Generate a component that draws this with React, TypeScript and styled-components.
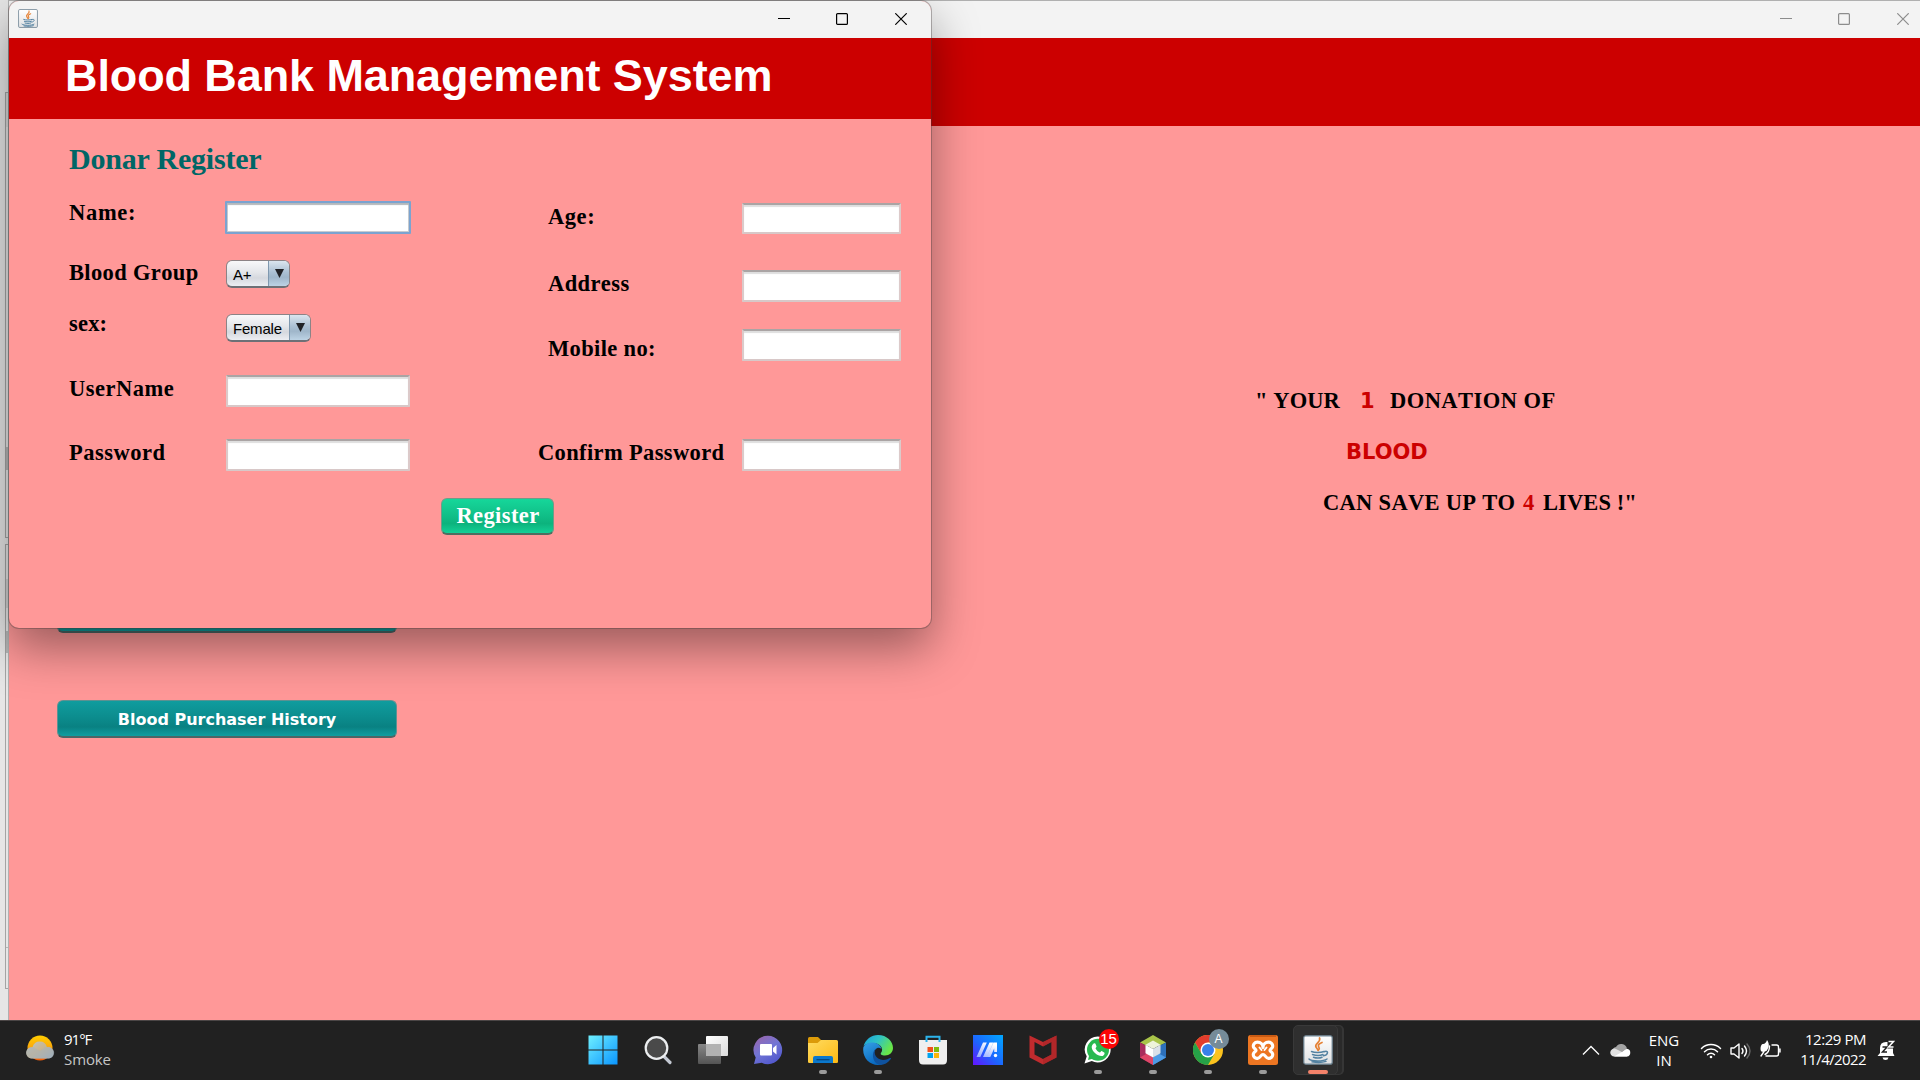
import React from "react";
import styled, { createGlobalStyle } from "styled-components";

const Global = createGlobalStyle`
  * { box-sizing: border-box; }
  html, body { margin: 0; padding: 0; }
  body { width: 1920px; height: 1080px; overflow: hidden; }
`;

const serif = `"Liberation Serif", "Times New Roman", serif`;
const sans = `"Liberation Sans", Arial, sans-serif`;
const wide = `"DejaVu Sans", Verdana, sans-serif`;
const system = `"Open Sans", "Segoe UI", sans-serif`;

const Screen = styled.div`
  display: flex;
  flex-direction: column;
  width: 1920px;
  height: 1080px;
  overflow: hidden;
`;

const Desktop = styled.main`
  position: relative;
  height: 1020px;
  overflow: hidden;
  background: #e6e6e6;
`;

/* Edge of the application lying behind both windows */
const Backdrop = styled.div`
  display: flex;
  flex-direction: column;
  width: 30px;
  height: 1020px;
  padding: 92px 0 0 5px;
`;

const BackPanel = styled.div<{ $h: number; $gap?: number }>`
  flex: none;
  display: flex;
  flex-direction: column;
  height: ${(p) => p.$h}px;
  margin-top: ${(p) => p.$gap ?? 0}px;
  border: 1px solid #a4a4a4;
`;

const BackMark = styled.div<{ $h: number; $drop: number; $c: string }>`
  flex: none;
  height: ${(p) => p.$h}px;
  margin-top: ${(p) => p.$drop}px;
  background: ${(p) => p.$c};
`;

const Window = styled.section<{ $w: number; $h: number; $front?: boolean }>`
  position: absolute;
  left: 9px;
  top: 1px;
  width: ${(p) => p.$w}px;
  height: ${(p) => p.$h}px;
  background: #ff9898;
  border-radius: ${(p) => (p.$front ? "10px" : "0")};
  box-shadow: ${(p) =>
    p.$front
      ? "0 0 0 1px rgba(70,60,60,.36), 0 20px 48px rgba(0,0,0,.4)"
      : "0 0 0 1px #b0b0b0"};
`;

const TitleBar = styled.header<{ $front?: boolean }>`
  display: flex;
  justify-content: space-between;
  height: 37px;
  padding-left: 9px;
  padding-right: ${(p) => (p.$front ? "1px" : "0")};
  background: #f3f3f3;
  border-radius: ${(p) => (p.$front ? "10px 10px 0 0" : "0")};
  color: ${(p) => (p.$front ? "#000" : "#8c8c8c")};
`;

const AppIcon = styled.span`
  width: 20px;
  height: 19px;
  margin-top: 8px;
  svg { display: block; }
`;

const Controls = styled.div`
  display: flex;
  margin-left: auto;
`;

const Control = styled.span`
  display: grid;
  place-items: center;
  width: 58.5px;
  height: 36px;
  svg { display: block; }
`;

const Banner = styled.div<{ $h: number }>`
  height: ${(p) => p.$h}px;
  padding: 12px 0 0 56px;
  background: #cc0000;
`;

const BannerTitle = styled.h1`
  margin: 0;
  color: #fff;
  font: bold 45px/52px ${sans};
  letter-spacing: -0.1px;
  white-space: nowrap;
`;

const FormBody = styled.div`
  padding: 23px 0 0 60px;
`;

const FormTitle = styled.h2`
  height: 34px;
  margin: 0 0 20px;
  color: #006666;
  font: bold 30px/34px ${serif};
  letter-spacing: -0.2px;
`;

const Columns = styled.div`
  display: flex;
  height: 290px;
`;

const Column = styled.div<{ $w: number }>`
  display: flex;
  flex-direction: column;
  width: ${(p) => p.$w}px;
`;

const FieldRow = styled.div<{ $h: number }>`
  display: flex;
  align-items: flex-start;
  height: ${(p) => p.$h}px;
`;

const Label = styled.label<{ $w: number; $drop: number; $track: number; $indent?: number }>`
  flex: none;
  width: ${(p) => p.$w}px;
  margin-top: ${(p) => p.$drop}px;
  padding-left: ${(p) => p.$indent ?? 0}px;
  color: #000;
  font: bold 22.5px/26px ${serif};
  font-kerning: none;
  font-variant-ligatures: none;
  letter-spacing: ${(p) => p.$track}px;
  white-space: nowrap;
`;

const TextBox = styled.input<{ $w: number; $h?: number; $drop: number; $focus?: boolean }>`
  flex: none;
  width: ${(p) => p.$w}px;
  height: ${(p) => p.$h ?? 32}px;
  margin: ${(p) => p.$drop}px 0 0 ${(p) => (p.$focus ? -1 : 0)}px;
  padding: 0 6px;
  outline: none;
  border-radius: 1px;
  background: #fff;
  font: 15px ${sans};
  ${(p) =>
    p.$focus
      ? `border: 2px solid #7ba3d0;
         box-shadow: inset 0 2px 1px #b4b8bc, inset 0 0 0 1px #c8ccd0;`
      : `border: 2px solid;
         border-color: #aaa4a4 #dccaca #d8c8c8 #dccaca;
         box-shadow: inset 0 2px 1px #dedede;`}
`;

const Combo = styled.div<{ $w: number; $drop: number }>`
  display: flex;
  width: ${(p) => p.$w}px;
  height: 28px;
  margin-top: ${(p) => p.$drop}px;
  overflow: hidden;
  border: 1px solid #8c8386;
  border-bottom: 2px solid #6d7076;
  border-radius: 6px;
  background: linear-gradient(#f8f8fa 0%, #e4e6ea 45%, #d5d8de 68%, #eceef3 100%);
`;

const ComboValue = styled.span`
  flex: 1;
  padding: 5px 0 0 6px;
  color: #000;
  font: 15px/18px ${sans};
  letter-spacing: -0.2px;
  white-space: nowrap;
`;

const ComboArrow = styled.span`
  display: grid;
  justify-items: center;
  width: 21px;
  padding-top: 8px;
  border-left: 1px solid #7f98af;
  background: linear-gradient(#dbe5ee 0%, #abc0d3 45%, #9fb6ca 65%, #bdd3e5 100%);
  svg { display: block; }
`;

const RegisterButton = styled.button`
  display: block;
  width: 113px;
  height: 37px;
  margin: 12px 0 0 372px;
  padding: 0 0 1px 1px;
  border: 1px solid #6f9c88;
  border-bottom: 2px solid #4e6e60;
  border-radius: 6px;
  background: linear-gradient(#16d79a 0%, #10be87 50%, #0cb37d 72%, #13d096 100%);
  color: #fff;
  font: bold 22.5px/26px ${serif};
  font-kerning: none;
  letter-spacing: 0.4px;
`;

const HomeContent = styled.div`
  display: flex;
  height: 893px;
`;

const Menu = styled.nav`
  display: flex;
  flex-direction: column;
  gap: 67px;
  width: 1246px;
  padding: 469px 0 0 48px;
`;

const MenuButton = styled.button`
  width: 340px;
  height: 38px;
  padding: 3px 0 0;
  border: 1px solid #5e9292;
  border-bottom: 2px solid #4c6666;
  border-radius: 6px;
  background: linear-gradient(#109c9e 0%, #0c8d8e 45%, #098182 74%, #109ea0 100%);
  color: #fff;
  font: bold 16px/20px ${wide};
`;

const Slogan = styled.div`
  display: flex;
  flex-direction: column;
  width: 665px;
  padding-top: 262px;
`;

const SloganLine = styled.div<{ $indent: number; $h: number }>`
  display: flex;
  height: ${(p) => p.$h}px;
  padding-left: ${(p) => p.$indent}px;
  line-height: 26px;
`;

const Words = styled.span<{ $w: number; $track?: number; $red?: boolean }>`
  flex: none;
  width: ${(p) => p.$w}px;
  color: ${(p) => (p.$red ? "#cc0000" : "#000")};
  font: bold 22.5px/26px ${serif};
  font-kerning: none;
  letter-spacing: ${(p) => p.$track ?? 0}px;
  white-space: nowrap;
`;

const Accent = styled.span<{ $w?: number }>`
  flex: none;
  width: ${(p) => (p.$w ? `${p.$w}px` : "auto")};
  color: #cc0000;
  font: bold 21px/27px ${wide};
`;

const Taskbar = styled.footer`
  display: flex;
  height: 60px;
  border-top: 1px solid #4b4646;
  background: #212121;
  color: #fff;
  font: 15px/20px ${system};
`;

const Weather = styled.div`
  display: flex;
  width: 575px;
  padding: 8px 0 0 25px;
  gap: 9px;
  svg { display: block; margin-top: 5px; }
`;

const Lines = styled.div<{ $align?: string }>`
  display: flex;
  flex-direction: column;
  align-items: ${(p) => p.$align ?? "flex-start"};
`;

const Line = styled.span<{ $track?: number; $dim?: boolean }>`
  height: 20px;
  letter-spacing: ${(p) => p.$track ?? 0}px;
  color: ${(p) => (p.$dim ? "#c6c6c6" : "#fff")};
  white-space: nowrap;
`;

const Dock = styled.div`
  display: flex;
  width: 770px;
`;

const DockItem = styled.div<{ $active?: boolean }>`
  display: flex;
  flex-direction: column;
  align-items: center;
  width: ${(p) => (p.$active ? "45px" : "55px")};
  height: ${(p) => (p.$active ? "50px" : "60px")};
  margin: ${(p) => (p.$active ? "4px 0 0 3px" : "0")};
  padding: ${(p) => (p.$active ? "5px 0 0 5px" : "10px 0 0")};
  border: ${(p) => (p.$active ? "1px solid #393939" : "0")};
  border-radius: 5px;
  background: ${(p) => (p.$active ? "#2f2f2f" : "transparent")};
  box-shadow: ${(p) => (p.$active ? "5px 0 0 -1px #2a2a2a, 6px 0 0 0 #363636" : "none")};
`;

const IconBox = styled.div`
  position: relative;
  flex: none;
  display: grid;
  place-items: center;
  width: 38px;
  height: 38px;
  svg { display: block; }
`;

const Indicator = styled.span<{ $active?: boolean }>`
  width: ${(p) => (p.$active ? 20 : 8)}px;
  height: 4px;
  margin-top: 1px;
  border-radius: 2px;
  background: ${(p) => (p.$active ? "#f4826a" : "#9b9b9b")};
`;

const Badge = styled.span<{ $c: string; $s: number }>`
  position: absolute;
  right: -2px;
  top: -2px;
  display: grid;
  place-items: center;
  width: 20px;
  height: 20px;
  border-radius: 50%;
  background: ${(p) => p.$c};
  color: #fff;
  font: ${(p) => p.$s}px/20px ${sans};
`;

const Tray = styled.div`
  display: flex;
  width: 338px;
  margin-left: auto;
  padding-top: 8px;
  svg { display: block; }
`;

const TrayCell = styled.div<{ $w: number; $drop?: number; $gap?: number }>`
  flex: none;
  width: ${(p) => p.$w}px;
  margin-left: ${(p) => p.$gap ?? 0}px;
  padding-top: ${(p) => p.$drop ?? 0}px;
`;

const JavaCup = ({ w, h }: { w: number; h: number }) => (
  <svg width={w} height={h} viewBox="0 0 30 30" preserveAspectRatio="none">
    <defs>
      <linearGradient id="tile" x2="0" y2="1">
        <stop stopColor="#fff" /><stop offset="1" stopColor="#dfe1e3" />
      </linearGradient>
    </defs>
    <rect x=".8" y=".8" width="28.4" height="28.4" rx="2" fill="url(#tile)" stroke="#6d8493" strokeWidth="1.2" />
    <path d="M16.5 3c2 4-5.5 5.500-3.500 9 .6 1.200 1.800 2 2 3.500M19 7.500c-3.500 1.500-4.500 3-3 5 .8 1.200 0 2.200-.8 3" fill="none" stroke="#e58235" strokeWidth="1.700" strokeLinecap="round" />
    <path d="M8.500 16.500c3 1.200 9 1.200 12.500 0M9.500 19.500c3 1 8 1 10.500 0M10.500 22.200c2.500 .9 6.500 .9 8.500 0M21 16.800c5-2 4.500 3.200-.5 4M6 24c2.500 2.500 14.500 2.500 18 0M9 26.800c5 1 11 .6 14-.4" fill="none" stroke="#5382a1" strokeWidth="1.500" strokeLinecap="round" />
  </svg>
);

const WindowControls = () => (
  <Controls>
    <Control><svg width="12" height="12"><path d="M0 5.500h12" stroke="currentColor" /></svg></Control>
    <Control><svg width="12" height="12"><rect x=".6" y=".6" width="10.800" height="10.800" rx="1" fill="none" stroke="currentColor" strokeWidth="1.200" /></svg></Control>
    <Control><svg width="12" height="12"><path d="M.3.3l11.400 11.400M11.700.3.3 11.700" stroke="currentColor" strokeWidth="1.200" /></svg></Control>
  </Controls>
);

const Select = ({ value, width, drop }: { value: string; width: number; drop: number }) => (
  <Combo $w={width} $drop={drop}>
    <ComboValue>{value}</ComboValue>
    <ComboArrow><svg width="9" height="9"><path d="M0 0h9L4.500 9z" fill="#202226" /></svg></ComboArrow>
  </Combo>
);

const WindowsLogo = () => (
  <svg width="30" height="30" viewBox="0 0 30 30">
    <defs><linearGradient id="win" x2="1" y2="1"><stop stopColor="#6ff0ff" /><stop offset="1" stopColor="#0a95ff" /></linearGradient></defs>
    <path d="M.5.500h14v14H.5zM15.500.500h14v14h-14zM.5 15.500h14v14H.5zM15.500 15.500h14v14h-14z" fill="url(#win)" />
  </svg>
);

const SearchIcon = () => (
  <svg width="30" height="30" viewBox="0 0 30 30">
    <path d="M20 20.500l7 7" stroke="#c3c8d2" strokeWidth="3.200" strokeLinecap="round" />
    <circle cx="13.500" cy="13" r="10.800" fill="#4a4a4a" stroke="#eceef0" strokeWidth="2.200" />
  </svg>
);

const TaskViewIcon = () => (
  <svg width="32" height="30" viewBox="0 0 32 30">
    <defs>
      <linearGradient id="tv" x2="1" y2="1"><stop stopColor="#fff" /><stop offset="1" stopColor="#dcdcdc" /></linearGradient>
      <linearGradient id="tb" x2="0" y2="1"><stop stopColor="#888" /><stop offset="1" stopColor="#545454" /></linearGradient>
    </defs>
    <rect x="9" y="1" width="22" height="20" rx="1" fill="url(#tv)" />
    <rect x="1" y="9" width="23" height="20" rx="1" fill="url(#tb)" />
    <path d="M9 9h15v12H9z" fill="#b2b2b2" />
  </svg>
);

const ChatIcon = () => (
  <svg width="30" height="30" viewBox="0 0 30 30">
    <defs><linearGradient id="chat" x1=".1" x2=".7" y2="1"><stop stopColor="#9b65aa" /><stop offset=".5" stopColor="#7275d5" /><stop offset="1" stopColor="#5057cd" /></linearGradient></defs>
    <path d="M15 .800a14.200 14.200 0 1 1-6.200 27L1 29l1.700-6.500A14.200 14.200 0 0 1 15 .8z" fill="url(#chat)" />
    <rect x="7" y="9" width="12" height="11.500" rx="1" fill="#fff" />
    <path d="M20 13l3.500-3v9.500L20 16.500z" fill="#fff" />
  </svg>
);

const FolderIcon = () => (
  <svg width="30" height="28" viewBox="0 0 30 28">
    <defs><linearGradient id="fold" x2="1" y2="1"><stop stopColor="#ffdc61" /><stop offset="1" stopColor="#fdb913" /></linearGradient></defs>
    <path d="M0 2.500Q0 1 1.500 1H10l3 3v8H0z" fill="#dc9b09" />
    <path d="M0 7h9.500L13 4h15.500Q30 4 30 5.500V26q0 1-1.500 1h-27Q0 27 0 26z" fill="url(#fold)" />
    <path d="M5 27v-5q0-2 2-2h16q2 0 2 2v5z" fill="#0b78cc" />
    <path d="M8.500 23.700h13" stroke="#06477f" strokeWidth="1.300" />
  </svg>
);

const EdgeIcon = () => (
  <svg width="30" height="30" viewBox="0 0 30 30">
    <defs>
      <linearGradient id="eg" x2="1" y2=".5"><stop stopColor="#1a9fe0" /><stop offset=".5" stopColor="#30c3c3" /><stop offset="1" stopColor="#69e647" /></linearGradient>
      <linearGradient id="eb" x2=".5" y2="1"><stop stopColor="#36a0e6" /><stop offset="1" stopColor="#0868bf" /></linearGradient>
    </defs>
    <path d="M.6 11C2.500 4.500 8.300 0 15 0c9 0 15 6.500 15 13 0 4.500-3.500 7.500-8 7.500-3.500 0-5-1.300-4-2.500 3.500-4.500-1.500-10-7.500-10C5.500 8 2 9.500.6 11z" fill="url(#eg)" />
    <path d="M.4 12C2.500 8.800 6 7.200 10 7.600c5 .4 8 3.400 8.400 6.400-3-3-8 0-7.400 6 .6 5 4 8.500 8.500 9.300C9 32.500-1.500 24 .4 12z" fill="url(#eb)" />
    <path d="M13 13.600c-3.500 5 .5 11.400 7 11.400 3.500 0 5.500-1.300 7-2 .8-.3 1.300.3.800 1-2.800 4-6.500 5.700-10.800 6C10 29 7.500 18 13 13.600z" fill="#0f529e" />
  </svg>
);

const StoreIcon = () => (
  <svg width="30" height="30" viewBox="0 0 30 30">
    <path d="M1 5h28v20q0 4.500-4 4.500H5q-4 0-4-4.500z" fill="#efefef" />
    <path d="M8.500 7V1.700h13V7" fill="none" stroke="#2cb4ec" strokeWidth="2" />
    <path d="M9.500 12H15v5H9.500z" fill="#f1511b" /><path d="M16 12h5v5h-5z" fill="#80bb0a" />
    <path d="M9.500 18H15v5H9.500z" fill="#00a3ee" /><path d="M16 18h5v5h-5z" fill="#fbb60a" />
  </svg>
);

const MyAsusIcon = () => (
  <svg width="30" height="30" viewBox="0 0 30 30">
    <defs>
      <linearGradient id="asus" x1="0" y1="1" x2="1" y2="0"><stop stopColor="#6512ff" /><stop offset=".45" stopColor="#1d65ff" /><stop offset="1" stopColor="#00a8ff" /></linearGradient>
      <linearGradient id="bars" x1="0" y1="1" x2=".6" y2="0"><stop stopColor="#8fa7ff" /><stop offset="1" stopColor="#fff" /></linearGradient>
    </defs>
    <path d="M0 0h30v30H0z" fill="url(#asus)" />
    <path d="M3.500 22L10 7.500h3.800L7.300 22zM10 22l6.500-14.500h3.800L13.800 22zM20.500 7.500H24V17h-2.800v-3.500L17.300 22h-3.500z" fill="url(#bars)" />
    <circle cx="22.500" cy="20.500" r="1.700" fill="#fff" />
  </svg>
);

const McAfeeIcon = () => (
  <svg width="28" height="30" viewBox="0 0 28 30">
    <path d="M.5.500L14 7 27.500.500v22L14 29.500.5 22.500zM5.500 7v12.500L14 24l8.500-4.500V7L14 11.500z" fill="#c12b2e" fillRule="evenodd" />
    <path d="M14 7L27.500.500v22L14 29.500V24l8.500-4.500V7L14 11.500z" fill="#a82427" opacity=".6" />
  </svg>
);

const WhatsAppIcon = () => (
  <svg width="28" height="28" viewBox="0 0 28 28">
    <path d="M14 .500a13 13 0 1 1-6.200 24.600L.5 27.500l2.200-7.200A13 13 0 0 1 14 .5z" fill="#fff" />
    <circle cx="14" cy="13.800" r="11" fill="#29b950" />
    <path d="M4 24l1.500-6 4 4.500z" fill="#29b950" />
    <path d="M9.700 7.500c.5-.5 1.500-.5 1.800.2l1 2.500c.3.800-1.200 1.700-.9 2.300 1 2 2.300 3.100 4.100 3.900.7.3 1.300-1.600 2-1.300l2.500 1.300c1 .5-.1 3.300-2.200 3.600-3.500.6-10-4-10.300-8.700-.1-1.500.8-2.700 2-3.800z" fill="#fff" />
  </svg>
);

const NetBeansIcon = () => (
  <svg width="28" height="30" viewBox="0 0 28 30">
    <path d="M14 0l13 7.500-7 3.500-6-3-6 3-7-3.500z" fill="#a9c449" />
    <path d="M1 7.500l7 3.500v7.500l6 4V30L1 22.500z" fill="#a92d5c" />
    <path d="M1 22.500l7-4 6 4V30z" fill="#df4668" />
    <path d="M27 7.500L20 11v7.500l-6 4V30l13-7.500z" fill="#2c70bb" />
    <path d="M27 22.500l-7-4-6 4V30z" fill="#4d9be6" />
    <path d="M14 5.500l7.500 4.200-7.500 4.300-7.500-4.300z" fill="#eef3d9" /><path d="M6.500 9.700l7.500 4.300v8.500l-7.500-4.300z" fill="#fff" /><path d="M21.500 9.700L14 14v8.500l7.500-4.300z" fill="#dbe1e9" />
  </svg>
);

const ChromeIcon = () => (
  <svg width="30" height="30" viewBox="0 0 30 30">
    <circle cx="15" cy="15" r="15" fill="#fcc31e" />
    <path d="M2 7.500A15 15 0 0 1 28 7.500H15L8.500 18.700z" fill="#e23c2d" />
    <path d="M2 7.500A15 15 0 0 0 15 30l6.500-11.300h-13z" fill="#26a148" />
    <circle cx="15" cy="15" r="7.500" fill="#fff" /><circle cx="15" cy="15" r="6" fill="#3980ea" />
  </svg>
);

const XamppIcon = () => (
  <svg width="30" height="30" viewBox="0 0 30 30">
    <rect width="30" height="30" rx="2.500" fill="#ed7622" />
    <path d="M2 1h26" stroke="#c95a12" strokeWidth="2" />
    <path
      d="M15 12.500C15 9.500 12.500 7.200 9.500 7.200S4.800 9.500 5.500 12C6 13.600 8 14 8 15.300S5.800 17 5.400 18.800C4.800 21.500 7 23.600 9.500 23.300 12.500 23 12.800 19.500 15 19.500S17.500 23 20.500 23.300C23 23.600 25.200 21.500 24.600 18.800 24.200 17 22 16.600 22 15.300S24 13.600 24.500 12C25.200 9.500 23.500 7.200 20.500 7.200S15 9.500 15 12.500z"
      fill="none" stroke="#fff" strokeWidth="3.200" strokeLinejoin="round"
    />
    <path d="M11.500 12.500l2 2.500M18.500 12.500l-2 2.500" stroke="#fff" strokeWidth="2" strokeLinecap="round" />
  </svg>
);

const WeatherIcon = () => (
  <svg width="30" height="28" viewBox="0 0 30 28">
    <defs>
      <linearGradient id="sun" x2="0" y2="1"><stop stopColor="#ffce00" /><stop offset=".6" stopColor="#fb9e0c" /><stop offset="1" stopColor="#f45c0a" /></linearGradient>
      <linearGradient id="cloud" x2="1" y2=".8"><stop stopColor="#b9c7cc" /><stop offset=".5" stopColor="#c9b692" /><stop offset="1" stopColor="#9aabb9" /></linearGradient>
    </defs>
    <circle cx="15" cy="14" r="12.500" fill="url(#sun)" />
    <path d="M6 24.500A5.700 5.700 0 0 1 7.500 13.200a7.500 7.500 0 0 1 14.500 0 5.700 5.700 0 0 1 2 11.300z" fill="url(#cloud)" />
    <path d="M7 24.500A5.700 5.700 0 1 1 8.500 13.300L15 17l6.500-4A5.700 5.700 0 0 1 25 24.300z" fill="#a8b2ba" opacity=".55" />
  </svg>
);

type Task = { icon: React.ReactNode; open?: boolean; active?: boolean };
const tasks: Task[] = [
  { icon: <WindowsLogo /> },
  { icon: <SearchIcon /> },
  { icon: <TaskViewIcon /> },
  { icon: <ChatIcon /> },
  { icon: <FolderIcon />, open: true },
  { icon: <EdgeIcon />, open: true },
  { icon: <StoreIcon /> },
  { icon: <MyAsusIcon /> },
  { icon: <McAfeeIcon /> },
  { icon: <><WhatsAppIcon /><Badge $c="#fb0505" $s={15}>15</Badge></>, open: true },
  { icon: <NetBeansIcon />, open: true },
  { icon: <><ChromeIcon /><Badge $c="#758b98" $s={12}>A</Badge></>, open: true },
  { icon: <XamppIcon />, open: true },
  { icon: <JavaCup w={30} h={30} />, open: true, active: true },
];

export default function App() {
  return (
    <Screen>
      <Global />
      <Desktop>
        <Backdrop>
          <BackPanel $h={446}>
            <BackMark $h={34} $drop={0} $c="#dadada" />
            <BackMark $h={23} $drop={320} $c="#b6b6b6" />
          </BackPanel>
          <BackPanel $h={445} $gap={6}>
            <BackMark $h={29} $drop={34} $c="#d2d2d2" />
            <BackMark $h={22} $drop={23} $c="#b6b6b6" />
            <BackMark $h={1} $drop={294} $c="#b6b6b6" />
          </BackPanel>
        </Backdrop>

        <Window $w={1923} $h={1019}>
          <TitleBar><WindowControls /></TitleBar>
          <Banner $h={88} />
          <HomeContent>
            <Menu>
              <MenuButton>&nbsp;</MenuButton>
              <MenuButton>Blood Purchaser History</MenuButton>
            </Menu>
            <Slogan>
              <SloganLine $indent={-0} $h={51}>
                <Words $w={105} $track={0.1}>" YOUR</Words>
                <Accent $w={30}>1</Accent>
                <Words $w={170} $track={0.45}>DONATION OF</Words>
              </SloganLine>
              <SloganLine $indent={91} $h={51}>
                <Accent>BLOOD</Accent>
              </SloganLine>
              <SloganLine $indent={68} $h={26}>
                <Words $w={200} $track={0.3}>CAN SAVE UP TO</Words>
                <Words $w={20} $red>4</Words>
                <Words $w={100} $track={0.1}>LIVES !"</Words>
              </SloganLine>
            </Slogan>
          </HomeContent>
        </Window>

        <Window $w={922} $h={627} $front>
          <TitleBar $front>
            <AppIcon><JavaCup w={20} h={19} /></AppIcon>
            <WindowControls />
          </TitleBar>
          <Banner $h={81}><BannerTitle>Blood Bank Management System</BannerTitle></Banner>
          <FormBody>
            <FormTitle>Donar Register</FormTitle>
            <Columns>
              <Column $w={469}>
                <FieldRow $h={60}>
                  <Label $w={157} $drop={4} $track={0.7}>Name:</Label>
                  <TextBox $w={186} $h={33} $drop={5} $focus />
                </FieldRow>
                <FieldRow $h={52}>
                  <Label $w={157} $drop={4} $track={0.35}>Blood Group</Label>
                  <Select value="A+" width={64} drop={4} />
                </FieldRow>
                <FieldRow $h={62}>
                  <Label $w={157} $drop={3} $track={0.2}>sex:</Label>
                  <Select value="Female" width={85} drop={6} />
                </FieldRow>
                <FieldRow $h={64}>
                  <Label $w={157} $drop={6} $track={0.5}>UserName</Label>
                  <TextBox $w={184} $drop={5} />
                </FieldRow>
                <FieldRow $h={52}>
                  <Label $w={157} $drop={6} $track={0.5}>Password</Label>
                  <TextBox $w={184} $drop={5} />
                </FieldRow>
              </Column>
              <Column $w={380}>
                <FieldRow $h={70}>
                  <Label $w={204} $indent={10} $drop={8} $track={0.55}>Age:</Label>
                  <TextBox $w={159} $h={31} $drop={7} />
                </FieldRow>
                <FieldRow $h={58}>
                  <Label $w={204} $indent={10} $drop={5} $track={0.4}>Address</Label>
                  <TextBox $w={159} $drop={4} />
                </FieldRow>
                <FieldRow $h={110}>
                  <Label $w={204} $indent={10} $drop={12} $track={0.35}>Mobile no:</Label>
                  <TextBox $w={159} $drop={5} />
                </FieldRow>
                <FieldRow $h={52}>
                  <Label $w={204} $drop={6} $track={0.36}>Confirm Password</Label>
                  <TextBox $w={159} $drop={5} />
                </FieldRow>
              </Column>
            </Columns>
            <RegisterButton>Register</RegisterButton>
          </FormBody>
        </Window>
      </Desktop>

      <Taskbar>
        <Weather>
          <WeatherIcon />
          <Lines><Line $track={-1}>91°F</Line><Line $dim $track={-0.1}>Smoke</Line></Lines>
        </Weather>
        <Dock>
          {tasks.map((t, i) => (
            <DockItem key={i} $active={t.active}>
              <IconBox>{t.icon}</IconBox>
              {t.open && <Indicator $active={t.active} />}
            </DockItem>
          ))}
        </Dock>
        <Tray>
          <TrayCell $w={28} $drop={16}>
            <svg width="18" height="10"><path d="M1 9.500L9 1.500l8 8" fill="none" stroke="#fff" strokeWidth="1.300" /></svg>
          </TrayCell>
          <TrayCell $w={28} $drop={14}>
            <svg width="21" height="14" viewBox="0 0 21 14">
              <path d="M2.500 8.500A4.500 4.500 0 0 1 6 4a6 6 0 0 1 11 1.500L12 9z" fill="#a3a3a3" />
              <path d="M4.500 13.500a4 4 0 1 1 1-7.800L12 9l4-3a4 4 0 0 1 .8 7.500z" fill="#e2e2e2" />
              <path d="M4 13.500L12 9l5-3.200a3.900 3.900 0 0 1 0 7.700z" fill="#fff" />
            </svg>
          </TrayCell>
          <TrayCell $w={52} $drop={1}>
            <Lines $align="center"><Line>ENG</Line><Line>IN</Line></Lines>
          </TrayCell>
          <TrayCell $w={30} $gap={10} $drop={14}>
            <svg width="22" height="16" viewBox="0 0 22 16" fill="none" stroke="#fff" strokeWidth="1.500" strokeLinecap="round">
              <path d="M1.500 5.500a13.500 13.500 0 0 1 19 0M4.500 8.800a9.200 9.200 0 0 1 13 0M7.500 11.800a5 5 0 0 1 7 0" />
              <circle cx="11" cy="14" r="1.300" fill="#fff" stroke="none" />
            </svg>
          </TrayCell>
          <TrayCell $w={30} $drop={13}>
            <svg width="21" height="18" viewBox="0 0 21 18" fill="none" stroke="#fff" strokeWidth="1.400" strokeLinecap="round" strokeLinejoin="round">
              <path d="M1 6v6h3l5 4V2L4 6zM12 6.500q2 2.500 0 5M14.500 4q4 5 0 10" />
              <path d="M17 2q6 7 0 14" stroke="#666" />
            </svg>
          </TrayCell>
          <TrayCell $w={31} $drop={11}>
            <svg width="21" height="18" viewBox="0 0 21 18" fill="none" stroke="#fff" strokeWidth="1.400" strokeLinecap="round">
              <path d="M12 5h4.500q2 0 2 2v7q0 2-2 2H6M20 9v3" />
              <path d="M7 0c2.500 3.500 2.500 7-.5 11C3 12.500.5 12 .5 9s1-5 2.500-5c2 0 3.500-2 4-4z" fill="#fff" stroke="none" />
              <path d="M1 16l3-4.500" /><path d="M9.500 6c0 4-1.500 7-4.500 8.500" />
            </svg>
          </TrayCell>
          <TrayCell $w={75}>
            <Lines $align="flex-end"><Line $track={-0.45}>12:29 PM</Line><Line $track={-0.6}>11/4/2022</Line></Lines>
          </TrayCell>
          <TrayCell $w={20} $gap={11} $drop={11}>
            <svg width="18" height="21" viewBox="0 0 18 21">
              <path d="M3 8q0-6 6-6h7v11l1.500 3H.5L3 13z" fill="#fff" />
              <path d="M5.500 17.500h6q-.5 2.500-3 2.500t-3-2.500z" fill="#fff" />
              <path d="M5.500 7H10l-4.500 5H10" fill="none" stroke="#202020" strokeWidth="1.500" />
              <path d="M10.500 0H18v8.500h-7.500z" fill="#212121" />
              <path d="M11.500 1.500h5L11.500 7h5" fill="none" stroke="#fff" strokeWidth="1.500" />
            </svg>
          </TrayCell>
        </Tray>
      </Taskbar>
    </Screen>
  );
}
